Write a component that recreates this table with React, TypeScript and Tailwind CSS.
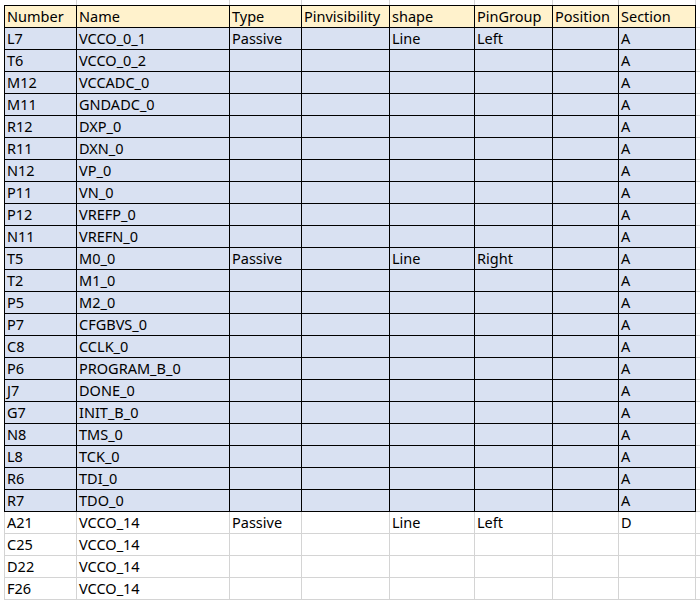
type Row = {
  number: string;
  name: string;
  type?: string;
  shape?: string;
  group?: string;
  section: string;
  blue: boolean;
};

const headers = ['Number', 'Name', 'Type', 'Pinvisibility', 'shape', 'PinGroup', 'Position', 'Section'];

const blueNames: [string, string][] = [
  ['L7', 'VCCO_0_1'],
  ['T6', 'VCCO_0_2'],
  ['M12', 'VCCADC_0'],
  ['M11', 'GNDADC_0'],
  ['R12', 'DXP_0'],
  ['R11', 'DXN_0'],
  ['N12', 'VP_0'],
  ['P11', 'VN_0'],
  ['P12', 'VREFP_0'],
  ['N11', 'VREFN_0'],
  ['T5', 'M0_0'],
  ['T2', 'M1_0'],
  ['P5', 'M2_0'],
  ['P7', 'CFGBVS_0'],
  ['C8', 'CCLK_0'],
  ['P6', 'PROGRAM_B_0'],
  ['J7', 'DONE_0'],
  ['G7', 'INIT_B_0'],
  ['N8', 'TMS_0'],
  ['L8', 'TCK_0'],
  ['R6', 'TDI_0'],
  ['R7', 'TDO_0'],
];

const rows: Row[] = [
  ...blueNames.map(([number, name]) => {
    const row: Row = { number, name, section: 'A', blue: true };
    if (number === 'L7') Object.assign(row, { type: 'Passive', shape: 'Line', group: 'Left' });
    if (number === 'T5') Object.assign(row, { type: 'Passive', shape: 'Line', group: 'Right' });
    return row;
  }),
  { number: 'A21', name: 'VCCO_14', type: 'Passive', shape: 'Line', group: 'Left', section: 'D', blue: false },
  { number: 'C25', name: 'VCCO_14', section: '', blue: false },
  { number: 'D22', name: 'VCCO_14', section: '', blue: false },
  { number: 'F26', name: 'VCCO_14', section: '', blue: false },
];

const cols = 'grid grid-cols-[73px_153px_72px_88px_85px_78px_66px_77px_1fr]';

function Cell({ text, first, tone }: { text?: string; first?: boolean; tone: 'blue' | 'white' }) {
  const look = tone === 'blue' ? 'bg-[#d9e1f2] border-black' : 'bg-white border-[#d4d4d4]';
  return (
    <div
      className={`flex h-[22px] items-end overflow-hidden whitespace-nowrap border-r border-b pb-[1px] pl-[2px] text-[14.5px] leading-[20px] text-black ${look} ${first ? 'border-l' : ''}`}
    >
      {text}
    </div>
  );
}

export default function App() {
  return (
    <div className="h-[601px] w-[700px] overflow-hidden bg-white font-['Noto_Sans','Liberation_Sans',sans-serif]">
      {/* gridlines above the table */}
      <div className={`${cols} h-[5px] pl-[4px]`}>
        {headers.map((h) => (
          <div key={h} className="border-r border-[#d4d4d4]" />
        ))}
        <div />
      </div>

      <div className={`${cols} pl-[4px]`}>
        {headers.map((h, i) => (
          <div
            key={h}
            className={`flex h-[23px] items-end overflow-hidden whitespace-nowrap border-t border-r border-b border-black bg-[#fff2cc] pb-[1px] pl-[2px] text-[14.5px] leading-[20px] text-black ${i === 0 ? 'border-l' : ''}`}
          >
            {h}
          </div>
        ))}
        <div className="h-[23px] border-b border-[#d4d4d4]" />

        {rows.map((r) => {
          const tone = r.blue ? 'blue' : 'white';
          return [
            <Cell key={r.number + '0'} text={r.number} first tone={tone} />,
            <Cell key={r.number + '1'} text={r.name} tone={tone} />,
            <Cell key={r.number + '2'} text={r.type} tone={tone} />,
            <Cell key={r.number + '3'} tone={tone} />,
            <Cell key={r.number + '4'} text={r.shape} tone={tone} />,
            <Cell key={r.number + '5'} text={r.group} tone={tone} />,
            <Cell key={r.number + '6'} tone={tone} />,
            <Cell key={r.number + '7'} text={r.section} tone={tone} />,
            <div key={r.number + '8'} className="h-[22px] border-b border-[#d4d4d4]" />,
          ];
        })}
      </div>
    </div>
  );
}
